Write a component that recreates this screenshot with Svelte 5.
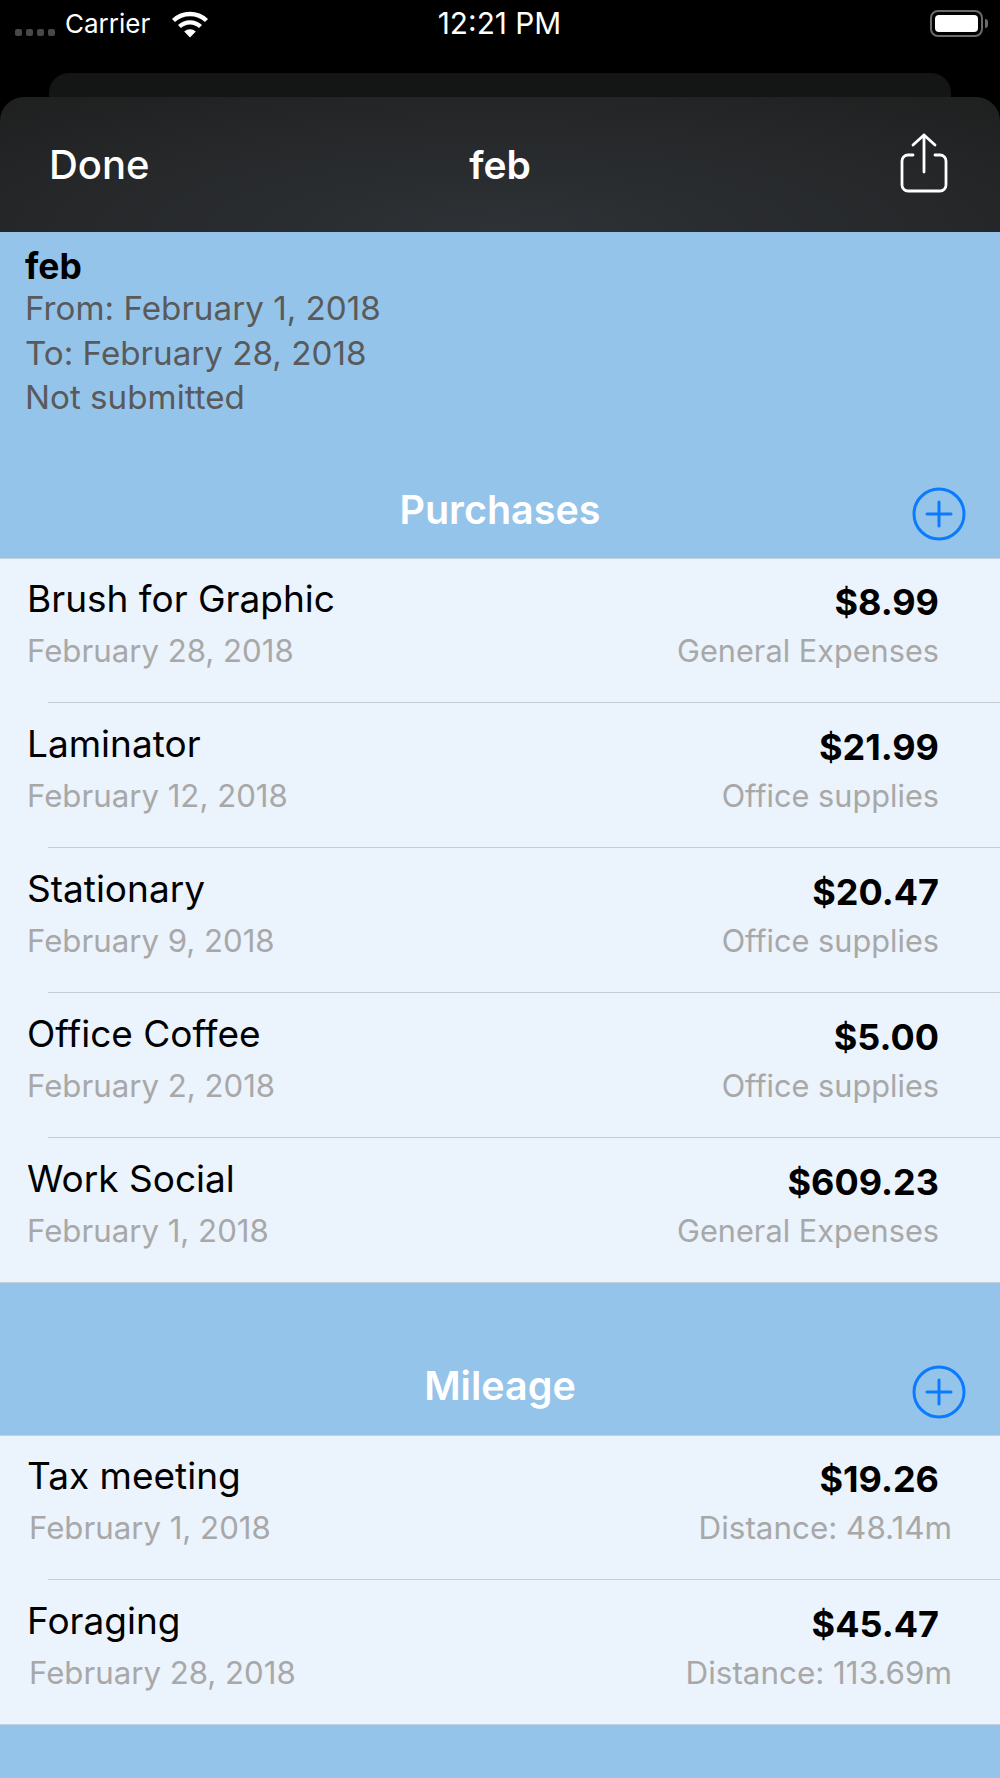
<script>
  const purchases = [
    { name: "Brush for Graphic", date: "February 28, 2018", amount: "$8.99", note: "General Expenses" },
    { name: "Laminator", date: "February 12, 2018", amount: "$21.99", note: "Office supplies" },
    { name: "Stationary", date: "February 9, 2018", amount: "$20.47", note: "Office supplies" },
    { name: "Office Coffee", date: "February 2, 2018", amount: "$5.00", note: "Office supplies" },
    { name: "Work Social", date: "February 1, 2018", amount: "$609.23", note: "General Expenses" },
  ];
  const mileage = [
    { name: "Tax meeting", date: "February 1, 2018", amount: "$19.26", note: "Distance: 48.14m" },
    { name: "Foraging", date: "February 28, 2018", amount: "$45.47", note: "Distance: 113.69m" },
  ];
</script>

{#snippet plus()}
  <svg class="plus" width="54" height="54" viewBox="0 0 54 54" fill="none" stroke="#0a7aff">
    <circle cx="27" cy="27" r="25" stroke-width="3" />
    <path d="M15 27h24M27 15v24" stroke-width="3" stroke-linecap="round" />
  </svg>
{/snippet}

{#snippet rows(items, cls)}
  <ul class="list {cls}">
    {#each items as item}
      <li class="row">
        <span class="name">{item.name}</span>
        <span class="amount">{item.amount}</span>
        <span class="date">{item.date}</span>
        <span class="note">{item.note}</span>
      </li>
    {/each}
  </ul>
{/snippet}

<div class="screen">
  <div class="status">
    <div class="status-left">
      <div class="dots"><i></i><i></i><i></i><i></i></div>
      <span>Carrier</span>
      <svg width="38" height="28" viewBox="0 0 38 28" fill="none" stroke="#fff" stroke-width="4.4">
        <path d="M2.5 10.5a24 24 0 0 1 33 0" />
        <path d="M8.5 16.5a15.5 15.5 0 0 1 21 0" />
        <path d="M19 27.5l-5.8-5.9a8.4 8.4 0 0 1 11.6 0z" fill="#fff" stroke="none" />
      </svg>
    </div>
    <span class="time">12:21 PM</span>
    <div class="battery"><div class="cell"><div class="charge"></div></div><div class="nub"></div></div>
  </div>

  <div class="back-card"></div>

  <div class="sheet">
    <header class="nav">
      <span class="done">Done</span>
      <span class="title">feb</span>
      <svg class="share" width="48" height="60" viewBox="0 0 48 60" fill="none" stroke="#fff" stroke-width="2.8" stroke-linecap="round" stroke-linejoin="round">
        <path d="M13 22H8a6 6 0 0 0-6 6v24a6 6 0 0 0 6 6h32a6 6 0 0 0 6-6V28a6 6 0 0 0-6-6h-5" />
        <path d="M24 39V2M13 12L24 2l11 10" />
      </svg>
    </header>

    <div class="body">
      <div class="meta">
        <div class="meta-name">feb</div>
        <div>From: February 1, 2018</div>
        <div>To: February 28, 2018</div>
        <div>Not submitted</div>
      </div>

      <div class="section-head first">
        <span></span>
        <h2>Purchases</h2>
        {@render plus()}
      </div>
      {@render rows(purchases, "")}

      <div class="section-head second">
        <span></span>
        <h2>Mileage</h2>
        {@render plus()}
      </div>
      {@render rows(mileage, "miles")}
    </div>
  </div>
</div>

<style>
  :global(body) {
    background: #000;
  }

  .screen {
    width: 1000px;
    height: 1778px;
    overflow: hidden;
    background: #000;
    font-family: Inter, "Liberation Sans", sans-serif;
  }

  .status {
    height: 73px;
    display: grid;
    grid-template-columns: 1fr auto 1fr;
    padding: 7px 12px 0 15px;
    box-sizing: border-box;
    color: #fff;
    font-size: 26px;
    line-height: 33px;
  }

  .status-left {
    display: flex;
    align-items: flex-start;
    gap: 10px;
  }

  .status-left svg {
    margin: 3px 0 0 11px;
  }

  .dots {
    display: flex;
    gap: 4px;
    margin: 22px 0 0;
  }

  .dots i {
    width: 7px;
    height: 7px;
    border-radius: 2px;
    background: #484848;
  }

  .time {
    justify-self: center;
    font-size: 29.8px;
    transform: translateX(-2px);
  }

  .battery {
    justify-self: end;
    display: flex;
    align-items: center;
    height: 27px;
    margin-top: 3px;
  }

  .cell {
    width: 53px;
    height: 27px;
    box-sizing: border-box;
    border: 2px solid #6a6a6a;
    border-radius: 8px;
    padding: 3px;
  }

  .charge {
    height: 100%;
    border-radius: 4px;
    background: #fff;
  }

  .nub {
    width: 3px;
    height: 9px;
    margin-left: 2px;
    border-radius: 0 3px 3px 0;
    background: #6a6a6a;
  }

  .back-card {
    height: 24px;
    margin: 0 49px;
    border-radius: 20px 20px 0 0;
    background: #141515;
  }

  .sheet {
    border-radius: 24px 24px 0 0;
    overflow: hidden;
  }

  .nav {
    height: 135px;
    display: grid;
    grid-template-columns: 1fr auto 1fr;
    align-items: center;
    padding: 0 49px;
    color: #fff;
    font-size: 39px;
    background: radial-gradient(ellipse 72% 130% at 50% 100%, #2e3236 0%, #26282a 60%, #1f2020 100%);
  }

  .done {
    font-size: 40px;
    font-weight: 500;
  }

  .title {
    font-weight: 600;
  }

  .share {
    justify-self: end;
    margin-right: 3px;
    transform: translateY(-2px);
  }

  .body {
    height: 1546px;
    background: #95c4eb;
  }

  .meta {
    padding: 16px 25px 0;
    color: #5a5a5a;
    font-size: 33.2px;
    line-height: 44.5px;
  }

  .meta-name {
    color: #000;
    font-size: 35.5px;
    font-weight: 700;
    line-height: 38px;
  }

  .section-head {
    display: grid;
    grid-template-columns: 1fr auto 1fr;
    align-items: center;
    padding-right: 34px;
    padding-left: 34px;
    box-sizing: border-box;
    border-bottom: 1px solid #c3cfdb;
  }

  .section-head.first {
    height: 139px;
    padding-top: 42px;
  }

  .section-head.second {
    height: 153px;
    padding-top: 54px;
  }

  h2 {
    margin: 0;
    color: #fff;
    font-size: 39.5px;
    font-weight: 600;
    line-height: 44px;
  }

  .plus {
    justify-self: end;
    transform: translateY(4px);
  }

  .second .plus {
    transform: translateY(6px);
  }

  .list {
    margin: 0;
    padding: 0;
    list-style: none;
    background: #ebf3fc;
    border-bottom: 1px solid #c3cfdb;
  }

  .row {
    height: 145px;
    box-sizing: border-box;
    display: grid;
    grid-template-columns: 1fr auto;
    grid-template-rows: 56px 48px;
    align-items: center;
    padding: 12px 61px 0 27px;
    position: relative;
  }

  /* inset hairline between rows */
  .row + .row::before {
    content: "";
    position: absolute;
    top: -2px;
    left: 48px;
    right: 0;
    height: 1px;
    background: #c8ccd2;
  }

  .row:last-child {
    height: 143px;
  }

  .name {
    color: #000;
    font-size: 37px;
  }

  .amount {
    justify-self: end;
    color: #000;
    font-size: 36px;
    font-weight: 700;
    transform: translateY(3px);
  }

  .date,
  .note {
    color: #a8a8a8;
    font-size: 31.2px;
  }

  .note {
    justify-self: end;
    font-size: 30.7px;
  }

  .miles .date {
    margin-left: 2px;
  }

  .miles .note {
    margin-right: -13px;
    font-size: 31.4px;
  }
</style>
